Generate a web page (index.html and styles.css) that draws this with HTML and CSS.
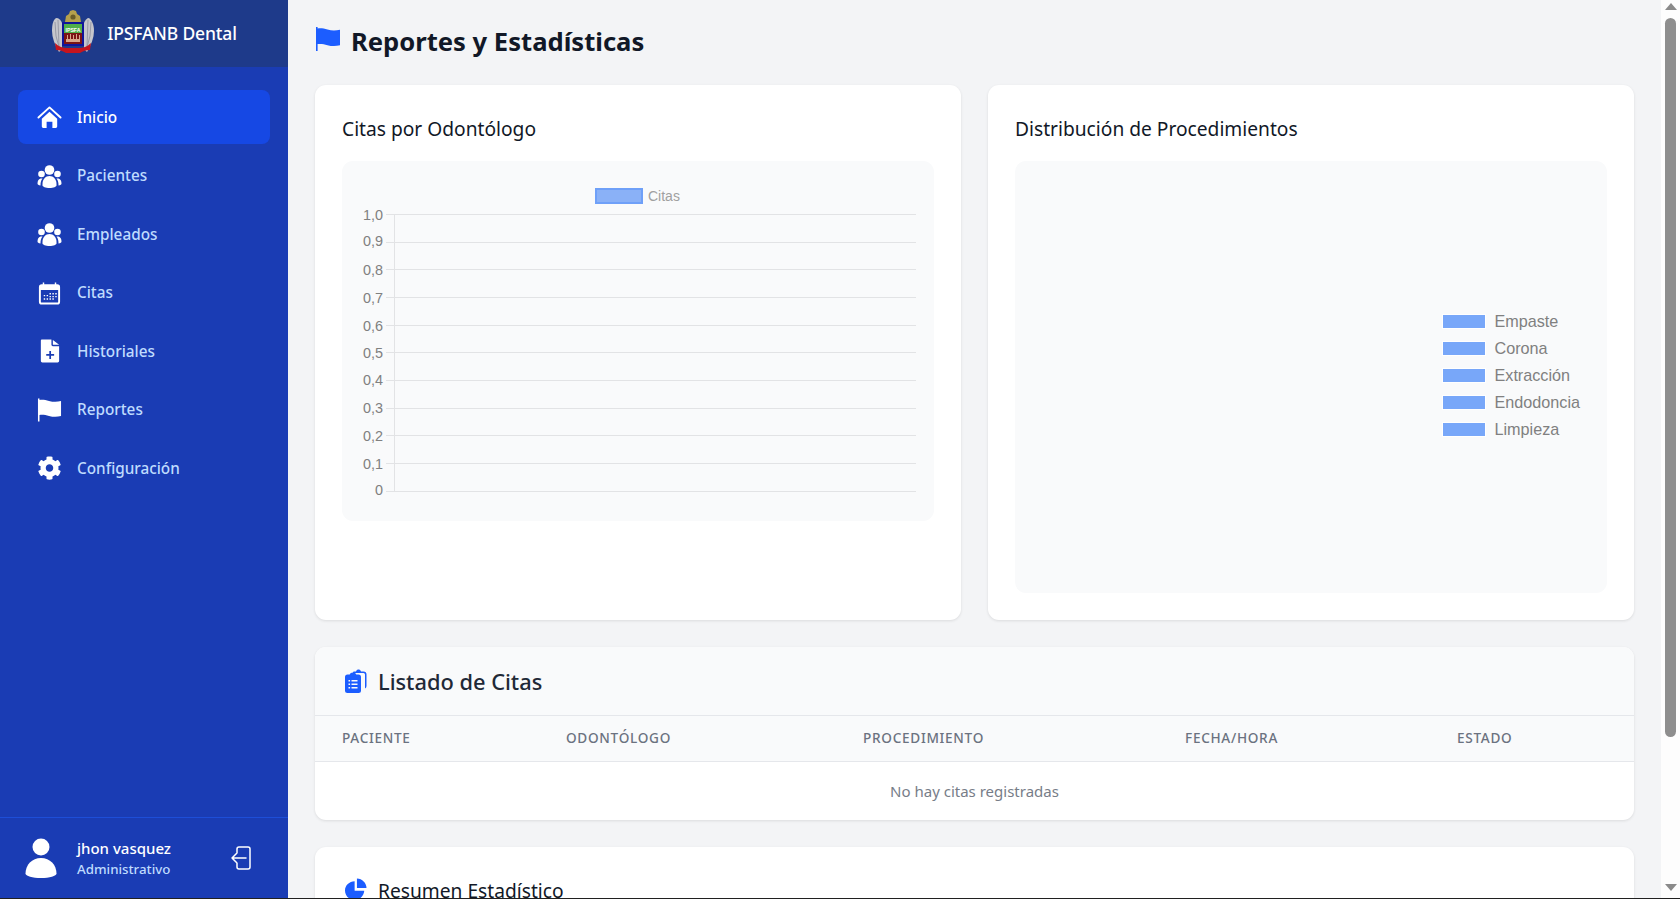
FILE: index.html
```html
<!DOCTYPE html>
<html lang="es">
<head>
<meta charset="utf-8">
<title>Reportes y Estadísticas</title>
<link rel="stylesheet" href="styles.css">
</head>
<body>
<div class="shell">
  <aside class="sidebar">
    <div class="brand">
      <svg class="logo" viewBox="0 0 44 44" aria-hidden="true">
        <path d="M5 9C2 11 1 16 1 22c0 7 3 14 7 21l3-3V14C10 11 8 9 5 9z" fill="#c6c6cc"/>
        <path d="M38 9c3 2 5 7 5 13 0 7-3 14-7 21l-3-3V14c1-3 3-5 5-5z" fill="#c6c6cc"/>
        <path d="M4 13l1 14 3 11M7 11l1 26M40 13l-1 14-3 11M37 11l-1 26" stroke="#8d8f9c" stroke-width=".8" fill="none"/>
        <path d="M14 13l1-6 3-2 1-3 3-1 3 1 1 3 3 2 1 6z" fill="#b5a04c"/>
        <circle cx="22" cy="8" r="2.600" fill="#6a5c28"/>
        <rect x="11" y="13" width="22" height="24" fill="#10149a"/>
        <rect x="13" y="15" width="18" height="9" fill="#4fae4a"/>
        <rect x="13" y="24" width="18" height="11" fill="#7c1414"/>
        <path d="M15 30h14v3H15zM16 26h1v4h-1zM19 25h1v5h-1zM22 26h1v4h-1zM25 25h1v5h-1zM28 26h1v4h-1z" fill="#d9a58a"/>
        <text class="logo-text" x="22" y="22.500" text-anchor="middle">IPSFA</text>
        <path d="M4 34c4 4 8 5 12 5h12c4 0 8-1 12-5l-1 7c-4 0-7 1-10 3H15c-3-2-6-3-10-3z" fill="#c5141e"/>
      </svg>
      <span class="brand-name">IPSFANB Dental</span>
    </div>
    <nav class="nav">
      <a class="nav-link active">
        <svg class="nav-icon" viewBox="0 0 26 24" aria-hidden="true"><path class="s" d="M1.500 12.500 13 2l11.500 10.500"/><path class="f" d="M13 6.500l8 7.300V22a1.500 1.500 0 0 1-1.500 1.500H16V17h-6v6.500H6.500A1.500 1.500 0 0 1 5 22v-8.200z"/></svg>
        <span>Inicio</span>
      </a>
      <a class="nav-link">
        <svg class="nav-icon" viewBox="0 0 25 24" aria-hidden="true"><use href="#users"/></svg>
        <span>Pacientes</span>
      </a>
      <a class="nav-link">
        <svg class="nav-icon" viewBox="0 0 25 24" aria-hidden="true"><use href="#users"/></svg>
        <span>Empleados</span>
      </a>
      <a class="nav-link">
        <svg class="nav-icon" viewBox="0 0 26 24" aria-hidden="true"><path class="f" d="M6 1h1.500v2h11V1H20v2h1a3 3 0 0 1 3 3v15a3 3 0 0 1-3 3H5a3 3 0 0 1-3-3V6a3 3 0 0 1 3-3h1zM4 9v12a1 1 0 0 0 1 1h16a1 1 0 0 0 1-1V9z"/><path class="f" d="M7 14h1.500v1.500H7zM10 14h1.500v1.500H10zM13 12h1.500v1.500H13zM16 12h1.500v1.500H16zM19 12h1.500v1.500H19zM13 15h1.500v1.500H13zM16 15h1.500v1.500H16zM19 15h1.500v1.500H19zM7 17.500h1.500V19H7zM10 17.500h1.500V19H10zM13 17.500h1.500V19H13zM16 17.500h1.500V19H16z"/></svg>
        <span>Citas</span>
      </a>
      <a class="nav-link">
        <svg class="nav-icon" viewBox="0 0 26 24" aria-hidden="true"><path class="f" fill-rule="evenodd" d="M5 0h10v5.500A1.500 1.500 0 0 0 16.500 7H23v15.500a1.500 1.500 0 0 1-1.500 1.500h-16A1.500 1.500 0 0 1 4 22.500V1a1 1 0 0 1 1-1zm7.800 12v3.200H9.600v1.800h3.200v3.200h1.800V17h3.200v-1.800h-3.200V12zM16.500 0.500 23 5.500h-6.500z"/></svg>
        <span>Historiales</span>
      </a>
      <a class="nav-link">
        <svg class="nav-icon" viewBox="0 0 26 24" aria-hidden="true"><use href="#flag"/></svg>
        <span>Reportes</span>
      </a>
      <a class="nav-link">
        <svg class="nav-icon" viewBox="0 0 512 512" aria-hidden="true"><path class="f" d="M487.400 315.700l-42.600-24.600c4.300-23.200 4.300-47 0-70.200l42.600-24.600c4.900-2.800 7.100-8.600 5.500-14-11.100-35.600-30-67.800-54.700-94.600-3.800-4.100-10-5.100-14.800-2.300L380.800 110c-17.900-15.400-38.500-27.300-60.800-35.100V25.800c0-5.600-3.900-10.500-9.400-11.700-36.700-8.200-74.300-7.800-109.200 0-5.500 1.200-9.400 6.100-9.400 11.700V75c-22.200 7.900-42.800 19.800-60.800 35.100L88.700 85.500c-4.900-2.800-11-1.900-14.800 2.300-24.700 26.700-43.600 58.900-54.700 94.600-1.700 5.400.6 11.200 5.500 14L67.300 221c-4.300 23.200-4.300 47 0 70.200l-42.600 24.600c-4.900 2.800-7.100 8.600-5.500 14 11.100 35.600 30 67.800 54.700 94.600 3.800 4.100 10 5.100 14.800 2.300l42.600-24.600c17.900 15.400 38.500 27.300 60.800 35.100v49.200c0 5.600 3.900 10.500 9.400 11.700 36.700 8.200 74.300 7.800 109.200 0 5.500-1.200 9.400-6.100 9.400-11.700v-49.200c22.200-7.900 42.800-19.800 60.800-35.100l42.600 24.600c4.900 2.800 11 1.900 14.800-2.300 24.700-26.700 43.600-58.900 54.700-94.600 1.500-5.500-.7-11.300-5.600-14.100zM256 336c-44.100 0-80-35.900-80-80s35.900-80 80-80 80 35.900 80 80-35.900 80-80 80z"/></svg>
        <span>Configuración</span>
      </a>
    </nav>
    <div class="user">
      <svg class="user-avatar" viewBox="0 0 32 40" aria-hidden="true"><circle class="f" cx="16" cy="9" r="8.500"/><path class="f" d="M16 20c9 0 15.500 7 15.500 15.500 0 2.500-7 4.500-15.500 4.500S.5 38 .5 35.500C.5 27 7 20 16 20z"/></svg>
      <div class="user-text">
        <div class="user-name">jhon vasquez</div>
        <div class="user-role">Administrativo</div>
      </div>
      <svg class="logout" viewBox="0 0 22 24" aria-hidden="true"><path d="M7 7V3a2 2 0 0 1 2-2h9a2 2 0 0 1 2 2v18a2 2 0 0 1-2 2H9a2 2 0 0 1-2-2v-4M16 12H2M6.500 7.500 2 12l4.500 4.500"/></svg>
    </div>
  </aside>

  <main class="main">
    <h1 class="page-title">
      <svg class="page-icon" viewBox="0 0 26 24" aria-hidden="true"><use href="#flag"/></svg>
      <span>Reportes y Estadísticas</span>
    </h1>

    <div class="charts">
      <section class="card">
        <h2 class="card-title">Citas por Odontólogo</h2>
        <div class="chart chart-bar">
          <svg class="bar-svg" viewBox="0 0 592 360">
            <rect class="legend-box" x="254" y="28" width="46" height="14"/>
            <text class="legend-label" x="306" y="40">Citas</text>
            <g class="grid">
              <path d="M44 53.500H574M44 81.500H574M44 108.500H574M44 136.500H574M44 164.500H574M44 191.500H574M44 219.500H574M44 247.500H574M44 274.500H574M44 302.500H574M44 330.500H574M52.500 53V331"/>
            </g>
            <g class="ticks">
              <text x="41" y="59">1,0</text>
              <text x="41" y="85">0,9</text>
              <text x="41" y="114">0,8</text>
              <text x="41" y="142">0,7</text>
              <text x="41" y="170">0,6</text>
              <text x="41" y="197">0,5</text>
              <text x="41" y="224">0,4</text>
              <text x="41" y="252">0,3</text>
              <text x="41" y="280">0,2</text>
              <text x="41" y="308">0,1</text>
              <text x="41" y="334">0</text>
            </g>
          </svg>
        </div>
      </section>
      <section class="card">
        <h2 class="card-title">Distribución de Procedimientos</h2>
        <div class="chart chart-pie">
          <ul class="pie-legend">
            <li class="pie-item"><i class="swatch"></i>Empaste</li>
            <li class="pie-item"><i class="swatch"></i>Corona</li>
            <li class="pie-item"><i class="swatch"></i>Extracción</li>
            <li class="pie-item"><i class="swatch"></i>Endodoncia</li>
            <li class="pie-item"><i class="swatch"></i>Limpieza</li>
          </ul>
        </div>
      </section>
    </div>

    <section class="card-flat">
      <header class="list-head">
        <svg class="section-icon" viewBox="0 0 22 24" aria-hidden="true"><path class="b" d="M8 3.500a1 1 0 0 1 1-1h2C11.500 1 12.500.5 13.500.5s2 .5 2.500 2h2.500a3 3 0 0 1 3 3V17a3 3 0 0 1-1.500 2.600V5.500a1.500 1.500 0 0 0-1.500-1.500H8z"/><path class="b" fill-rule="evenodd" d="M2.500 5.500h2.200C5.200 4.300 6.200 3.500 8 3.500s2.800.8 3.300 2h2.200A2.500 2.500 0 0 1 16 8v13.500a2.500 2.500 0 0 1-2.500 2.500h-11A2.500 2.500 0 0 1 0 21.500V8a2.500 2.500 0 0 1 2.500-2.500zM3.500 11v1.600h1.600V11zM6.500 11v1.600h6V11zM3.500 14.500v1.600h1.600v-1.600zM6.500 14.500v1.600h6v-1.600zM3.500 18v1.600h1.600V18zM6.500 18v1.600h6V18z"/></svg>
        <h2 class="section-title">Listado de Citas</h2>
      </header>
      <table class="table">
        <colgroup><col class="c1"><col class="c2"><col class="c3"><col class="c4"><col class="c5"></colgroup>
        <thead>
          <tr><th>Paciente</th><th>Odontólogo</th><th>Procedimiento</th><th>Fecha/Hora</th><th>Estado</th></tr>
        </thead>
        <tbody>
          <tr><td colspan="5">No hay citas registradas</td></tr>
        </tbody>
      </table>
    </section>

    <section class="card-flat summary">
      <svg class="section-icon" viewBox="0 0 24 24" aria-hidden="true"><path class="b" d="M10.500 3.500V14h10.500c-.3 5.600-4.800 10-10.500 10C4.700 24 0 19.300 0 13.500 0 8 4.700 3.700 10.500 3.500z"/><path class="b" d="M13 .5c5.800.2 10.300 4.700 10.500 10.500H13z"/></svg>
      <h2 class="summary-title">Resumen Estadístico</h2>
    </section>
  </main>

  <div class="scrollbar" aria-hidden="true">
    <div class="arrow-up"></div>
    <div class="thumb"></div>
    <div class="arrow-down"></div>
  </div>
</div>
<div class="edge"></div>

<svg class="defs" aria-hidden="true">
  <defs>
    <g id="users">
      <circle cx="12.500" cy="6" r="4.800"/>
      <circle cx="4.500" cy="10" r="3.300"/>
      <circle cx="20.500" cy="10" r="3.300"/>
      <path d="M12.500 12c4 0 7 3.500 7 8v1.500c0 1-3 2.500-7 2.500s-7-1.500-7-2.500V20c0-4.500 3-8 7-8z"/>
      <path d="M3.500 14.500C1.500 15 .5 17 .5 19.500c0 1 1 1.800 3 2.100 0-2.600.4-5 2-7z"/>
      <path d="M21.500 14.500c2 .5 3 2.500 3 5 0 1-1 1.800-3 2.100 0-2.600-.4-5-2-7z"/>
    </g>
    <path id="flag" d="M1 0h1.600v1.500C6 1 9 1.600 12.500 2.600c4 1.100 8 1.300 12.500.1v15.600c-4.500 1.200-8.500 1-12.500-.1C9 17.200 6 16.600 2.600 17.100V24H1z"/>
  </defs>
</svg>
</body>
</html>
```

FILE: styles.css
```css
* { box-sizing: border-box; }

html, body { margin: 0; height: 100%; overflow: hidden; }

body {
  font-family: "Noto Sans", "Open Sans", sans-serif;
  background: #f3f4f6;
  color: #111827;
}

.shell { display: flex; height: 898px; }

.edge { height: 1px; background: #202020; }

.defs { display: none; }

.f { fill: currentColor; }
.s { fill: none; stroke: currentColor; stroke-width: 2; stroke-linecap: round; stroke-linejoin: round; }
.b { fill: #1c5dff; }

/* Sidebar */
.sidebar {
  width: 288px;
  flex: none;
  display: flex;
  flex-direction: column;
  background: #1a3cb4;
  color: #fff;
}

.brand {
  height: 67px;
  flex: none;
  display: flex;
  align-items: center;
  justify-content: center;
  gap: 12px;
  background: #1e3a8a;
}

.logo { width: 44px; height: 44px; margin-top: -5px; }
.logo-text { font: bold 5.200px "Liberation Sans", sans-serif; fill: #fff; }

.brand-name { font-size: 17.500px; font-weight: 500; letter-spacing: -.15px; margin-top: -2px; }

.nav {
  flex: 1;
  display: flex;
  flex-direction: column;
  gap: 4.500px;
  padding: 23px 18px 0;
}

.nav-link {
  height: 54px;
  display: flex;
  align-items: center;
  gap: 15px;
  padding-left: 19px;
  border-radius: 8px;
  color: #bfdbfe;
  font-size: 15.300px;
  font-weight: 500;
  line-height: 20px;
}

.nav-link span { margin-top: -1px; }

.nav-link.active { background: #1648e4; color: #fff; }

.nav-icon { width: 25px; height: 24px; color: #fff; fill: #fff; flex: none; }

.user {
  height: 81px;
  flex: none;
  display: flex;
  align-items: center;
  padding: 0 36px 0 25px;
  border-top: 1px solid #1d4ed8;
}

.user-avatar { width: 32px; height: 40px; flex: none; }

.user-text { flex: 1; margin-left: 20px; }

.user-name { font-size: 15px; font-weight: 500; line-height: 20px; }
.user-role { font-size: 13.300px; font-weight: 500; line-height: 19px; margin-top: 2px; color: #bfdbfe; }

.logout { width: 22px; height: 24px; fill: none; stroke: #fff; stroke-width: 1.500; stroke-linecap: round; stroke-linejoin: round; }

/* Main */
.main {
  flex: 1;
  min-width: 0;
  padding: 22px 27px 0;
  overflow: hidden;
}

.page-title {
  height: 38px;
  margin: 0 0 25px;
  display: flex;
  align-items: center;
  gap: 10px;
  font-size: 25.600px;
  font-weight: 700;
  color: #111827;
}

.page-icon { width: 26px; height: 24px; fill: #1c5dff; flex: none; margin-top: -4px; }

.charts { display: grid; grid-template-columns: 646px 646px; gap: 27px; margin-bottom: 27px; }

.card {
  height: 535px;
  padding: 30px 27px 27px;
  background: #fff;
  border-radius: 11px;
  box-shadow: 0 1px 3px rgba(0, 0, 0, .1);
}

.card-title {
  margin: 0 0 18px;
  font-size: 19.200px;
  line-height: 28px;
  font-weight: 400;
  color: #111827;
}

.chart { background: #f9fafb; border-radius: 11px; }
.chart-bar { height: 360px; }
.chart-pie { height: 432px; display: flex; align-items: center; justify-content: flex-end; padding: 0 27px 0 0; }

.bar-svg { display: block; width: 592px; height: 360px; }

.legend-box { fill: #8ab1f7; stroke: #6fa0f8; stroke-width: 2; }
.legend-label { font: 14px "Liberation Sans", sans-serif; fill: #a0a0a0; }
.grid path { fill: none; stroke: #e2e3e5; stroke-width: 1; }
.ticks text { font: 14.400px "Liberation Sans", sans-serif; fill: #808080; text-anchor: end; }

.pie-legend { list-style: none; margin: -3px 0 0; padding: 0; display: flex; flex-direction: column; gap: 7px; }

.pie-item {
  height: 20px;
  display: flex;
  align-items: center;
  gap: 8px;
  font: 16.200px "Liberation Sans", sans-serif;
  color: #808080;
}

.swatch { width: 44px; height: 15px; background: #78a7f9; border: 1px solid #fff; flex: none; }

/* Appointment list */
.card-flat {
  background: #fff;
  border-radius: 11px;
  box-shadow: 0 1px 3px rgba(0, 0, 0, .1);
  margin-bottom: 27px;
  overflow: hidden;
}

.list-head {
  height: 69px;
  display: flex;
  align-items: center;
  gap: 11px;
  padding: 0 27px 0 30px;
  background: #f9fafb;
  border-bottom: 1px solid #e5e7eb;
}

.section-icon { width: 22px; height: 24px; flex: none; }

.section-title { margin: 0; font-size: 21.800px; font-weight: 500; color: #1f2937; }

.table { width: 100%; border-collapse: collapse; table-layout: fixed; }
.c1 { width: 224px; }
.c2 { width: 297px; }
.c3 { width: 322px; }
.c4 { width: 272px; }
.c5 { width: 204px; }

.table th {
  height: 45px;
  padding: 0 0 2px 27px;
  text-align: left;
  font-size: 13.600px;
  font-weight: 500;
  letter-spacing: .7px;
  text-transform: uppercase;
  color: #6b7280;
  background: #f9fafb;
  border-bottom: 1px solid #e5e7eb;
}

.table td {
  height: 59px;
  padding: 0;
  text-align: center;
  font-size: 15px;
  color: #777d88;
}

.summary {
  height: 120px;
  padding: 30px 30px 0;
  display: flex;
  align-items: flex-start;
  gap: 11px;
  margin-bottom: 0;
}

.summary-title { margin: 0; font-size: 19.200px; line-height: 28px; font-weight: 400; color: #111827; }

/* Scrollbar */
.scrollbar {
  width: 19px;
  flex: none;
  display: flex;
  flex-direction: column;
  align-items: center;
  background: #fdfdfd;
}

.arrow-up, .arrow-down { width: 0; height: 0; border-left: 6.500px solid transparent; border-right: 6.500px solid transparent; }
.arrow-up { margin-top: 3px; border-bottom: 7px solid #8a8a8a; }
.arrow-down { margin-top: auto; margin-bottom: 7px; border-top: 7px solid #8a8a8a; }
.thumb { width: 11px; height: 719px; margin-top: 8px; background: #8e8e8e; border-radius: 6px; }
```
